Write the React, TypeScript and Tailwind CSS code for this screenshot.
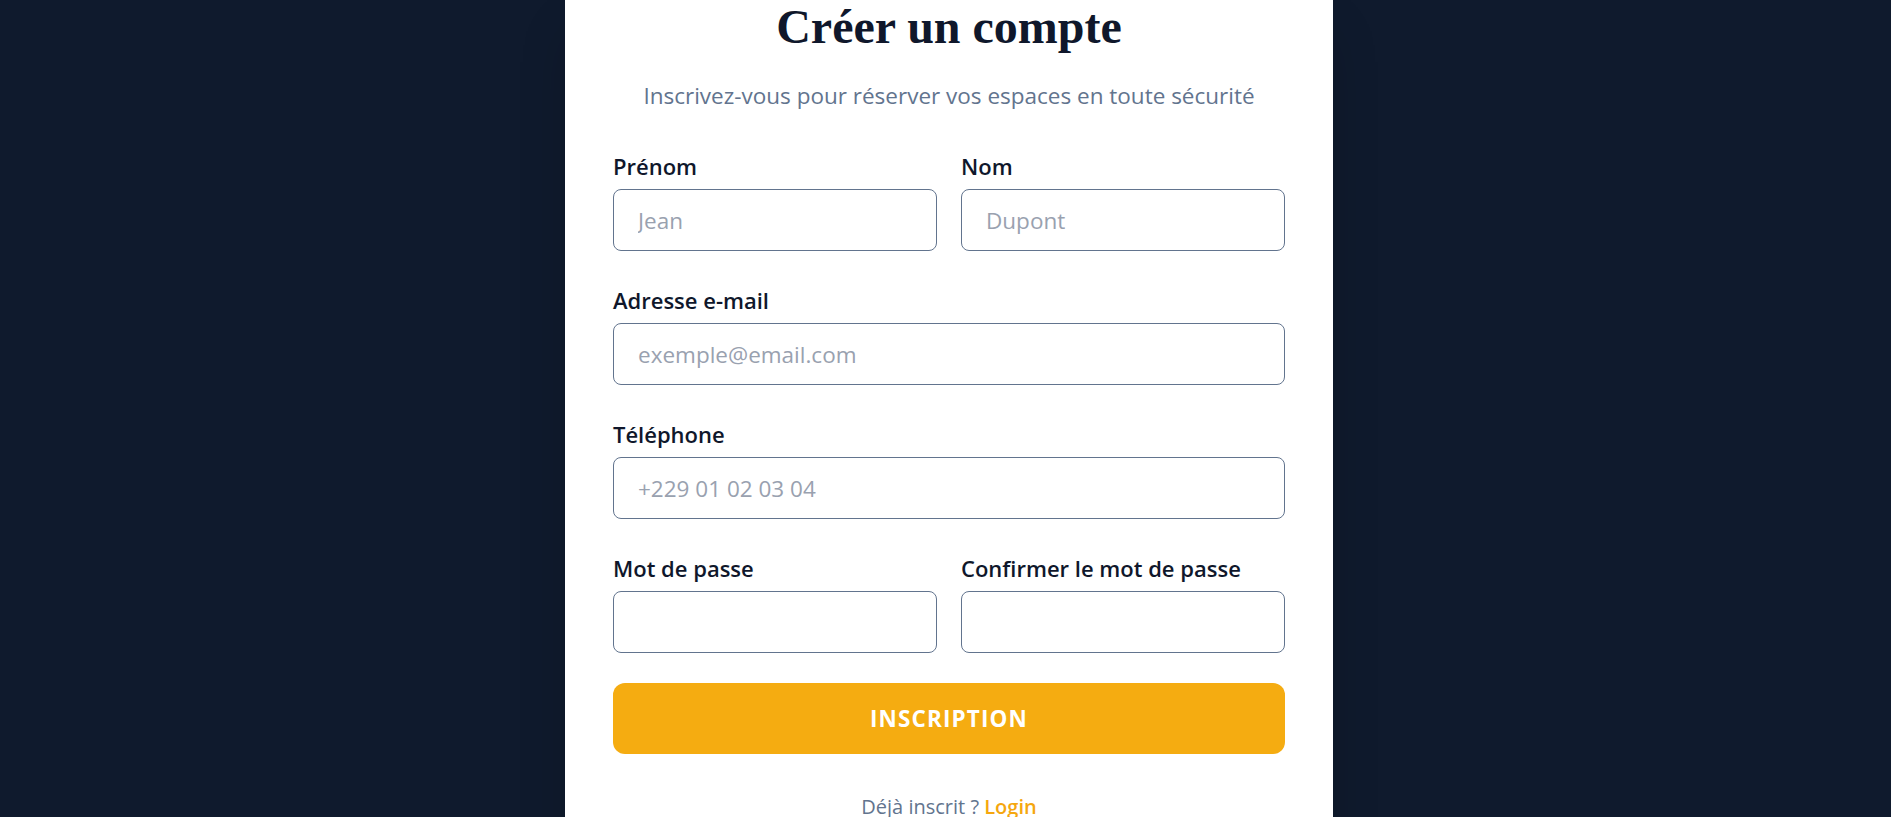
import { useState } from 'react';

// --- SIGNUP PAGE ---

type FieldProps = {
  label: string;
  type?: string;
  placeholder?: string;
  value: string;
  onChange: (v: string) => void;
};

function Field({ label, type = 'text', placeholder, value, onChange }: FieldProps) {
  return (
    <label className="flex flex-col">
      <span className="text-[22px] leading-7 font-semibold text-slate-900 mb-[9px]">{label}</span>
      <input
        type={type}
        placeholder={placeholder}
        value={value}
        onChange={(e) => onChange(e.target.value)}
        className="w-full h-[62px] px-6 text-[22.5px] text-slate-900 placeholder:text-gray-400 bg-white border border-slate-500 rounded-lg outline-none focus:border-amber-500"
      />
    </label>
  );
}

function App() {
  const [firstName, setFirstName] = useState('');
  const [lastName, setLastName] = useState('');
  const [email, setEmail] = useState('');
  const [phone, setPhone] = useState('');
  const [password, setPassword] = useState('');
  const [confirm, setConfirm] = useState('');

  return (
    <div className="min-h-screen bg-[#0f1a2d] flex justify-center pl-[7px] font-['Open_Sans',sans-serif]">
      <div className="w-[768px] bg-white px-12 pt-0 pb-12 shadow-2xl">
        <h1 className="text-center text-[48px] leading-[54px] font-bold text-slate-900 font-['Liberation_Serif',serif]">
          Créer un compte
        </h1>
        <p className="mt-[28px] text-center text-[22.5px] leading-7 text-slate-500">
          Inscrivez-vous pour réserver vos espaces en toute sécurité
        </p>

        <form className="mt-[42px]" onSubmit={(e) => e.preventDefault()}>
          <div className="flex flex-col gap-[35px]">
            <div className="grid grid-cols-2 gap-x-6">
              <Field label="Prénom" placeholder="Jean" value={firstName} onChange={setFirstName} />
              <Field label="Nom" placeholder="Dupont" value={lastName} onChange={setLastName} />
            </div>
            <Field label="Adresse e-mail" type="email" placeholder="exemple@email.com" value={email} onChange={setEmail} />
            <Field label="Téléphone" type="tel" placeholder="+229 01 02 03 04" value={phone} onChange={setPhone} />
            <div className="grid grid-cols-2 gap-x-6">
              <Field label="Mot de passe" type="password" value={password} onChange={setPassword} />
              <Field label="Confirmer le mot de passe" type="password" value={confirm} onChange={setConfirm} />
            </div>
          </div>

          <button
            type="submit"
            className="mt-[30px] w-full h-[71px] rounded-xl bg-[#f5ac11] text-white text-[22.5px] font-bold tracking-wider uppercase"
          >
            Inscription
          </button>
        </form>

        <p className="mt-[39px] text-center text-xl leading-7 text-slate-500">
          Déjà inscrit ? <a href="#" className="text-[#f5a70f] font-semibold">Login</a>
        </p>
      </div>
    </div>
  );
}

export default App;
